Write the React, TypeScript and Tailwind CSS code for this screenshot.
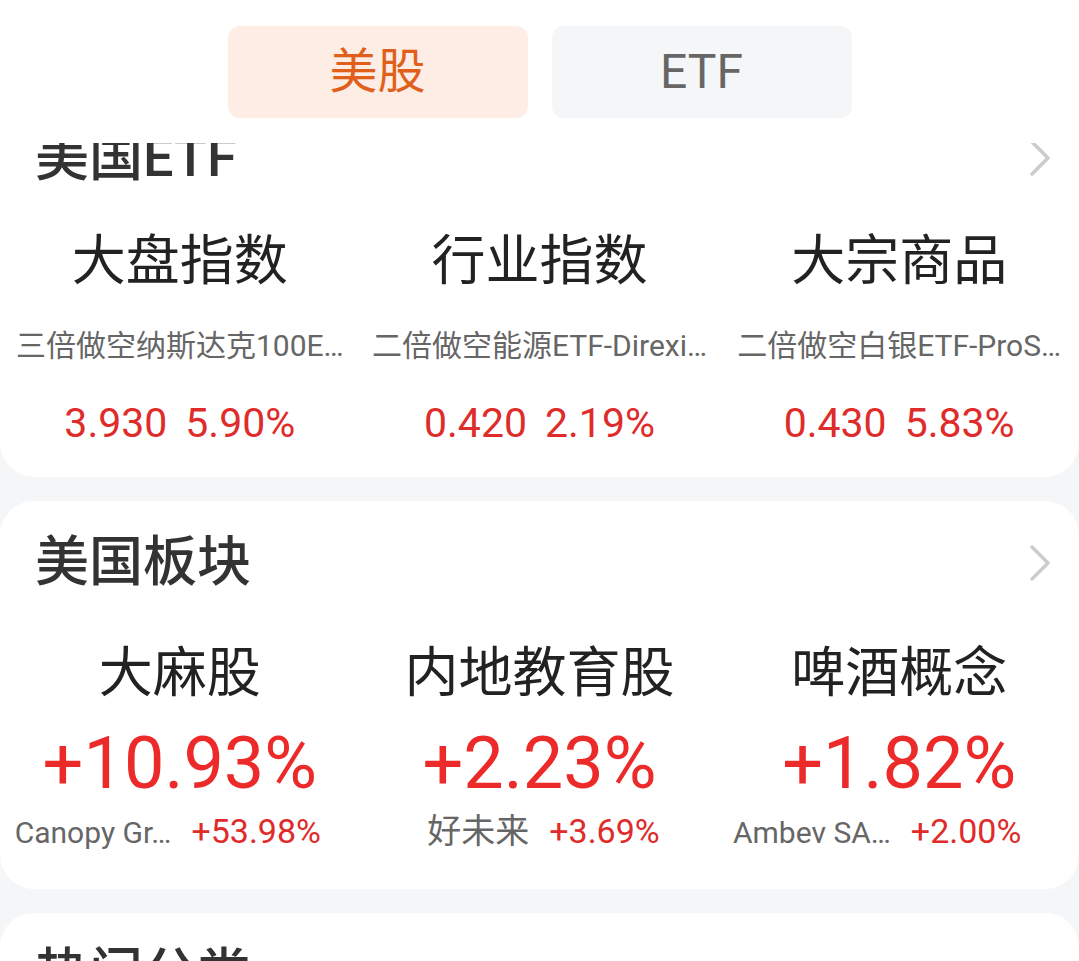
import React from "react";

function Chevron() {
  return (
    <svg width="22" height="38" viewBox="0 0 22 38" fill="none" className="shrink-0">
      <polyline points="3,3 19,19 3,35" stroke="#cccccc" strokeWidth="3.5" strokeLinecap="round" strokeLinejoin="round" />
    </svg>
  );
}

function CardHeader({ title, arrow = true }: { title: string; arrow?: boolean }) {
  return (
    <div className="flex h-[89px] items-center justify-between pl-[35px] pr-[28px] pt-[35px]">
      <div className="text-[54px] leading-none font-medium text-[#333333]">{title}</div>
      {arrow && <Chevron />}
    </div>
  );
}

const etfs = [
  { name: "大盘指数", sub: "三倍做空纳斯达克100E…", price: "3.930", pct: "5.90%" },
  { name: "行业指数", sub: "二倍做空能源ETF-Direxi…", price: "0.420", pct: "2.19%" },
  { name: "大宗商品", sub: "二倍做空白银ETF-ProS…", price: "0.430", pct: "5.83%" },
];

const sectors = [
  { name: "大麻股", pct: "+10.93%", stock: "Canopy Gr…", stockCls: "text-[30px]", spct: "+53.98%", shift: "pr-[24px]" },
  { name: "内地教育股", pct: "+2.23%", stock: "好未来", stockCls: "text-[34px]", spct: "+3.69%", shift: "pl-[8px]" },
  { name: "啤酒概念", pct: "+1.82%", stock: "Ambev SA…", stockCls: "text-[30px]", spct: "+2.00%", shift: "pr-[44px]" },
];

export default function App() {
  return (
    <div className="min-h-screen overflow-hidden bg-[#f5f6f8] font-['Roboto','Noto_Sans_CJK_SC',sans-serif]">
      <div className="relative z-10 flex h-[143px] justify-center gap-6 bg-white pt-[26px]">
        <div className="flex h-[92px] w-[300px] items-center justify-center rounded-[12px] bg-[#fdede4] text-[48px] leading-none text-[#e0601b]">
          美股
        </div>
        <div className="flex h-[92px] w-[300px] items-center justify-center rounded-[12px] bg-[#f5f6f8] text-[48px] leading-none text-[#666666]">
          ETF
        </div>
      </div>

      <div className="-mt-[47px] flex flex-col gap-6">
        <div className="rounded-[34px] bg-white pb-[33px]">
          <CardHeader title="美国ETF" />
          <div className="mt-[50px] grid grid-cols-3">
            {etfs.map((e) => (
              <div key={e.name} className="flex flex-col items-center">
                <div className="text-[54px] leading-none text-[#222222]">{e.name}</div>
                <div className="mt-[42px] whitespace-nowrap text-[30px] leading-none text-[#666666]">{e.sub}</div>
                <div className="mt-[42px] flex gap-[18px] text-[41px] leading-none text-[#e02b2b]">
                  <span>{e.price}</span>
                  <span>{e.pct}</span>
                </div>
              </div>
            ))}
          </div>
        </div>

        <div className="rounded-[34px] bg-white pb-[41px]">
          <CardHeader title="美国板块" />
          <div className="mt-[57px] grid grid-cols-3">
            {sectors.map((s) => (
              <div key={s.name} className="flex flex-col items-center">
                <div className="text-[54px] leading-none text-[#222222]">{s.name}</div>
                <div className="mt-[27px] text-[72px] leading-none text-[#ec2a2a]">{s.pct}</div>
                <div className={`mt-[14px] flex items-baseline justify-center gap-5 whitespace-nowrap leading-none ${s.shift}`}>
                  <span className={`${s.stockCls} text-[#666666]`}>{s.stock}</span>
                  <span className="text-[34px] text-[#e02b2b]">{s.spct}</span>
                </div>
              </div>
            ))}
          </div>
        </div>

        <div className="h-[300px] rounded-[34px] bg-white">
          <CardHeader title="热门分类" arrow={false} />
        </div>
      </div>
    </div>
  );
}
